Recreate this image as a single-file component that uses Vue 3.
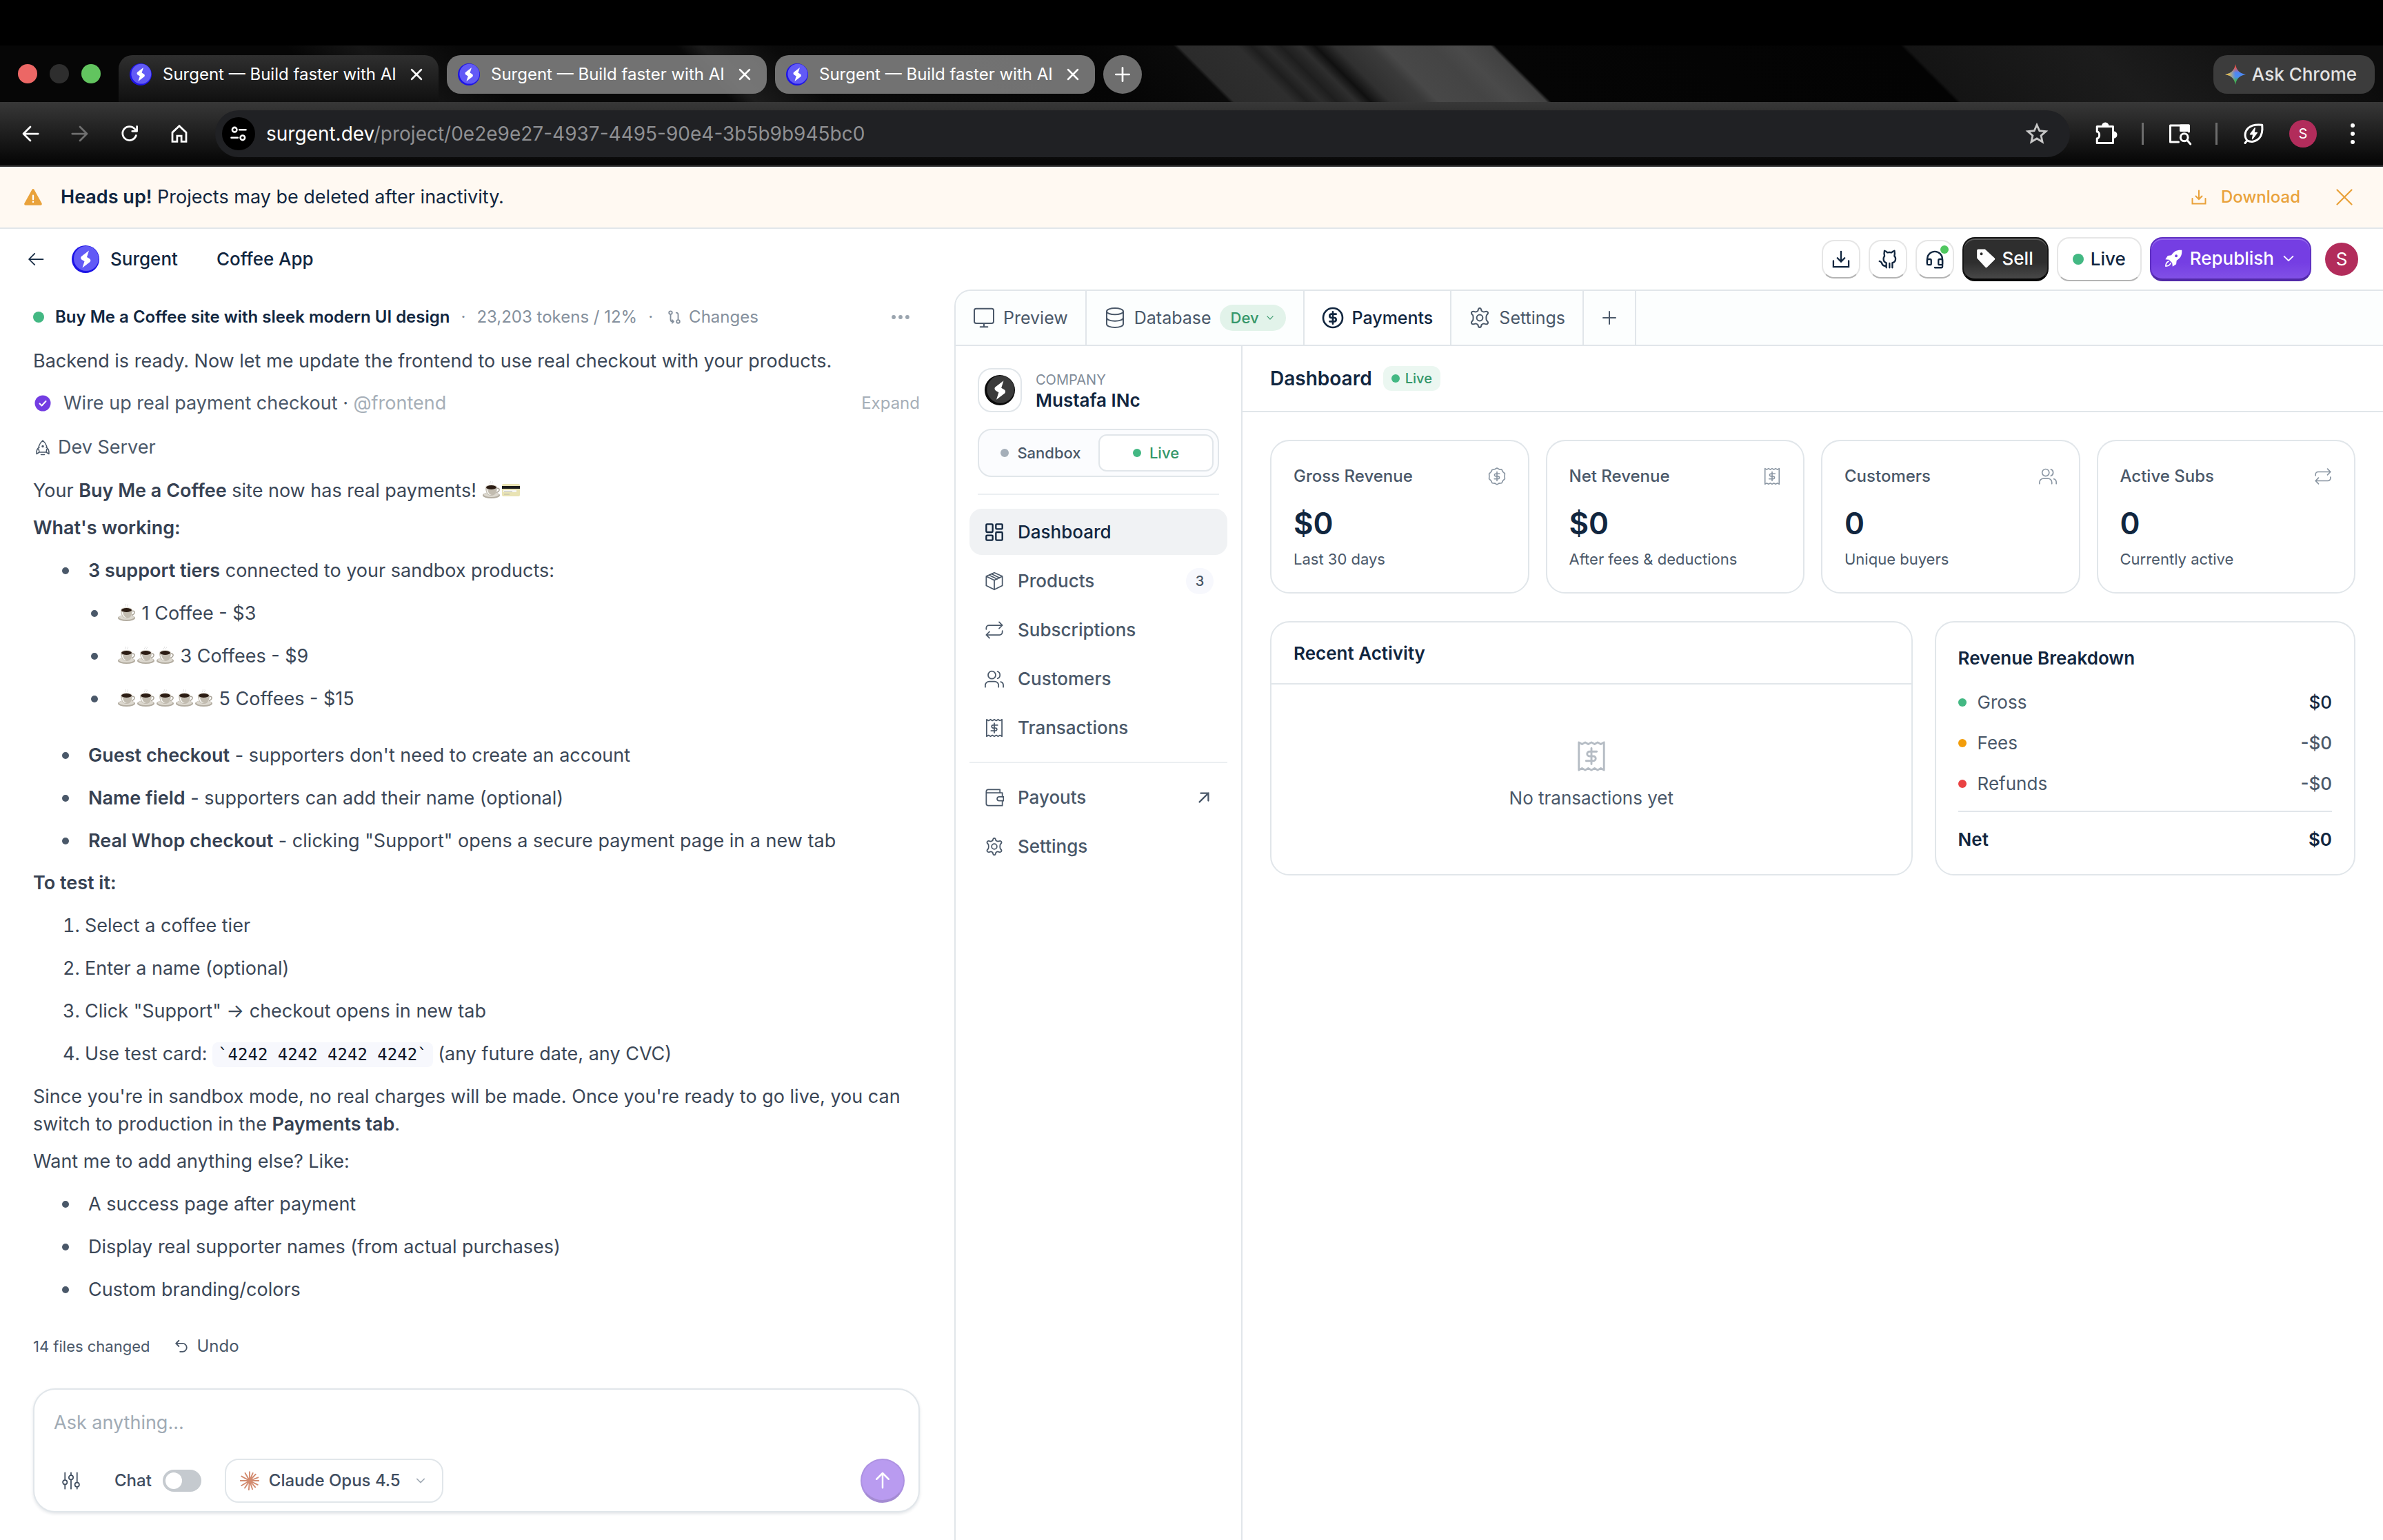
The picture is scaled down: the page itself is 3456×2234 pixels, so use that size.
<template>
    <div class="page">
        <!-- browser window -->
        <div class="tab-strip">
            <div class="lights">
                <span class="light red"></span>
                <span class="light grey"></span>
                <span class="light green"></span>
            </div>
            <div class="tabs">
                <div v-for="n in 3" :key="n" class="tab" :class="{ active: n === 1 }">
                    <Logo class="tab-logo" />
                    <span class="tab-title">Surgent — Build faster with AI</span>
                    <button class="plain" aria-label="Close tab"><Icon name="close" class="tab-close" /></button>
                </div>
                <button class="new-tab" aria-label="New tab"><Icon name="plus" /></button>
            </div>
            <button class="ask-chrome">
                <svg class="spark" viewBox="0 0 32 32">
                    <defs>
                        <linearGradient id="spark" x1="0" y1="0" x2="0" y2="1">
                            <stop offset="0.15" stop-color="#ee5146" />
                            <stop offset="0.42" stop-color="#4c86f5" />
                            <stop offset="0.62" stop-color="#4c8df0" />
                            <stop offset="0.8" stop-color="#3fae5a" />
                        </linearGradient>
                        <linearGradient id="spark-left" x1="0" y1="0" x2="1" y2="0">
                            <stop offset="0.1" stop-color="#fbc02d" />
                            <stop offset="0.5" stop-color="#fbc02d" stop-opacity="0" />
                        </linearGradient>
                    </defs>
                    <path d="M16 1C17.500 10 22 14.500 31 16C22 17.500 17.500 22 16 31C14.500 22 10 17.500 1 16C10 14.500 14.500 10 16 1Z" fill="url(#spark)" />
                    <path d="M16 1C17.500 10 22 14.500 31 16C22 17.500 17.500 22 16 31C14.500 22 10 17.500 1 16C10 14.500 14.500 10 16 1Z" fill="url(#spark-left)" />
                </svg>
                Ask Chrome
            </button>
        </div>
        <div class="toolbar">
            <button class="tool" aria-label="Back"><Icon name="navBack" /></button>
            <button class="tool dim" aria-label="Forward"><Icon name="navForward" /></button>
            <button class="tool" aria-label="Reload"><Icon name="reload" /></button>
            <button class="tool" aria-label="Home"><Icon name="home" /></button>
            <div class="address">
                <button class="site-info" aria-label="Site information"><Icon name="tune" /></button>
                <span class="url"><b>surgent.dev</b>/project/0e2e9e27-4937-4495-90e4-3b5b9b945bc0</span>
                <button class="tool star" aria-label="Bookmark"><Icon name="star" /></button>
            </div>
            <button class="tool big" aria-label="Extensions"><Icon name="puzzle" /></button>
            <span class="tool-line"></span>
            <button class="tool big" aria-label="Search tabs"><Icon name="tabSearch" /></button>
            <span class="tool-line"></span>
            <button class="tool big" aria-label="Energy saver"><Icon name="leaf" /></button>
            <button class="avatar small" aria-label="Profile">S</button>
            <button class="tool big" aria-label="Menu"><Icon name="dotsV" /></button>
        </div>

        <!-- notice -->
        <div class="notice">
            <Icon name="warning" class="warn-icon" />
            <p><strong>Heads up!</strong> Projects may be deleted after inactivity.</p>
            <a class="notice-link" href="#download"><Icon name="download" />Download</a>
            <button class="plain notice-close" aria-label="Dismiss"><Icon name="close" /></button>
        </div>

        <!-- project header -->
        <header class="project-bar">
            <button class="plain back" aria-label="Back to projects"><Icon name="arrowLeft" /></button>
            <a class="brand" href="#home"><Logo class="brand-logo" />Surgent</a>
            <span class="project-name">Coffee App</span>
            <div class="actions">
                <button class="square" aria-label="Download"><Icon name="download" /></button>
                <button class="square" aria-label="GitHub"><Icon name="github" /></button>
                <button class="square" aria-label="Support"><Icon name="headset" /><i class="online"></i></button>
                <button class="btn dark"><Icon name="tag" />Sell</button>
                <button class="btn light-btn"><i class="dot lg"></i>Live</button>
                <button class="btn purple"><Icon name="rocketSolid" />Republish<Icon name="chevron" class="chev" /></button>
            </div>
            <button class="avatar" aria-label="Account">S</button>
        </header>

        <div class="workspace">
            <!-- chat -->
            <section class="chat">
                <div class="chat-head">
                    <i class="dot lg"></i>
                    <strong>Buy Me a Coffee site with sleek modern UI design</strong>
                    <span class="sep">·</span>
                    <span>23,203 tokens / 12%</span>
                    <span class="sep">·</span>
                    <button class="plain changes"><Icon name="branch" />Changes</button>
                    <button class="plain more" aria-label="More"><Icon name="dotsH" /></button>
                </div>

                <div class="messages">
                    <p>Backend is ready. Now let me update the frontend to use real checkout with your products.</p>
                    <div class="step">
                        <Icon name="checkCircle" class="step-icon" />
                        <span>Wire up real payment checkout · <em>@frontend</em></span>
                        <button class="plain expand">Expand</button>
                    </div>
                    <div class="step server"><Icon name="rocket" class="step-icon" />Dev Server</div>
                    <p>Your <b>Buy Me a Coffee</b> site now has real payments! <Coffee /><svg class="emoji" viewBox="0 0 28 28"><rect x="1" y="5" width="26" height="18" rx="2" fill="#e9e3b4" /><rect x="1" y="8" width="26" height="4" fill="#1d1d1b" /><rect x="3" y="14" width="19" height="3" fill="#f6f6f2" /><path d="M4 16h12M4 20h8" stroke="#b9b8a8" stroke-width="1" /></svg></p>
                    <p class="tight"><b>What's working:</b></p>
                    <ul>
                        <li><span><b>3 support tiers</b> connected to your sandbox products:</span></li>
                        <li v-for="tier in tiers" :key="tier.label" class="nested">
                            <span><Coffee v-for="c in tier.cups" :key="c" />{{ ' ' + tier.label }}</span>
                        </li>
                        <li v-for="item in working" :key="item.title" :class="{ 'after-nested': item.first }">
                            <span><b>{{ item.title }}</b> - {{ item.text }}</span>
                        </li>
                    </ul>
                    <p><b>To test it:</b></p>
                    <ol>
                        <li>Select a coffee tier</li>
                        <li>Enter a name (optional)</li>
                        <li>Click "Support" → checkout opens in new tab</li>
                        <li>Use test card: <code>`4242 4242 4242 4242`</code> (any future date, any CVC)</li>
                    </ol>
                    <p>Since you're in sandbox mode, no real charges will be made. Once you're ready to go live, you can switch to production in the <b>Payments tab</b>.</p>
                    <p class="tight">Want me to add anything else? Like:</p>
                    <ul>
                        <li v-for="idea in ideas" :key="idea"><span>{{ idea }}</span></li>
                    </ul>
                    <div class="changed">
                        <span>14 files changed</span>
                        <button class="plain undo"><Icon name="undo" />Undo</button>
                    </div>
                </div>

                <form class="composer" @submit.prevent>
                    <textarea v-model="prompt" rows="1" placeholder="Ask anything..." aria-label="Message"></textarea>
                    <div class="composer-row">
                        <button type="button" class="plain sliders" aria-label="Options"><Icon name="sliders" /></button>
                        <label class="chat-toggle">Chat<input v-model="chatMode" type="checkbox" /></label>
                        <label class="model">
                            <Icon name="claude" class="claude" />
                            <select aria-label="Model"><option>Claude Opus 4.5</option></select>
                            <Icon name="chevron" class="chev" />
                        </label>
                        <button class="send" aria-label="Send"><Icon name="arrowUp" /></button>
                    </div>
                </form>
            </section>

            <!-- right panel -->
            <section class="panel">
                <nav class="panel-tabs">
                    <button class="panel-tab"><Icon name="monitor" />Preview</button>
                    <div class="panel-tab">
                        <Icon name="database" />Database
                        <label class="env">
                            <select aria-label="Database environment"><option>Dev</option></select>
                            <Icon name="chevron" class="chev" />
                        </label>
                    </div>
                    <button class="panel-tab current"><Icon name="dollarCircle" />Payments</button>
                    <button class="panel-tab"><Icon name="gear" />Settings</button>
                    <button class="panel-tab add" aria-label="Add tab"><Icon name="plus" /></button>
                </nav>

                <div class="panel-body">
                    <aside class="side">
                        <div class="company">
                            <span class="company-logo"><Logo dark /></span>
                            <div>
                                <small>COMPANY</small>
                                <strong>Mustafa INc</strong>
                            </div>
                        </div>
                        <div class="mode">
                            <button :class="{ on: mode === 'sandbox' }" @click="mode = 'sandbox'"><i class="dot off"></i>Sandbox</button>
                            <button :class="{ on: mode === 'live' }" @click="mode = 'live'"><i class="dot"></i>Live</button>
                        </div>
                        <nav class="menu">
                            <a v-for="item in menu" :key="item.label" href="#" :class="{ current: item.current, split: item.split }">
                                <Icon :name="item.icon" />
                                <span>{{ item.label }}</span>
                                <i v-if="item.count" class="count">{{ item.count }}</i>
                                <Icon v-if="item.external" name="arrowNe" class="ne" />
                            </a>
                        </nav>
                    </aside>

                    <main class="main">
                        <div class="main-head">
                            <h1>Dashboard</h1>
                            <span class="live-chip"><i class="dot"></i>Live</span>
                        </div>
                        <div class="content">
                            <div class="stats">
                                <div v-for="s in stats" :key="s.label" class="card stat">
                                    <div class="stat-top">{{ s.label }}<Icon :name="s.icon" /></div>
                                    <div class="stat-value">{{ s.value }}</div>
                                    <div class="stat-note">{{ s.note }}</div>
                                </div>
                            </div>
                            <div class="lower">
                                <div class="card recent">
                                    <h2>Recent Activity</h2>
                                    <div class="empty"><Icon name="receipt" />No transactions yet</div>
                                </div>
                                <div class="card breakdown">
                                    <h2>Revenue Breakdown</h2>
                                    <table>
                                        <tbody>
                                            <tr v-for="r in breakdown" :key="r.label">
                                                <th scope="row"><i class="dot" :class="r.color"></i>{{ r.label }}</th>
                                                <td :class="{ strong: r.color === 'gross' }">{{ r.value }}</td>
                                            </tr>
                                        </tbody>
                                        <tfoot>
                                            <tr>
                                                <th scope="row">Net</th>
                                                <td>$0</td>
                                            </tr>
                                        </tfoot>
                                    </table>
                                </div>
                            </div>
                        </div>
                    </main>
                </div>
            </section>
        </div>
    </div>
</template>

<script setup>
import { ref, h } from 'vue';

// 24x24 icon set
const icons = {
    close: '<path d="M5 5l14 14M19 5L5 19"/>',
    plus: '<path d="M12 3v18M3 12h18"/>',
    navBack: '<path d="M21 12H4M12 4l-8 8 8 8"/>',
    navForward: '<path d="M3 12h17M12 4l8 8-8 8"/>',
    reload: '<path d="M19.500 14A8 8 0 1 1 18 6.500l2 2M20.500 3.500v5.500H15"/>',
    home: '<path d="M4 10.500L12 3l8 7.500V21h-5.500v-6.500h-5V21H4z" stroke-linejoin="miter"/>',
    tune: '<circle cx="7" cy="7" r="2.800"/><path d="M13 7h8M3 17h8"/><circle cx="17" cy="17" r="2.800"/>',
    star: '<path d="M12 3l2.700 6 6.500.600-4.900 4.300 1.400 6.400-5.700-3.400-5.700 3.400 1.400-6.400L2.800 9.600l6.500-.600z" stroke-linejoin="miter"/>',
    puzzle: '<path d="M3.500 5H19v16H3.500v-4.500c3 0 3-6.500 0-6.500z"/><path d="M9 4.500a2.500 2.500 0 0 1 5 0z" fill="currentColor"/><path d="M19.500 10.500a2.500 2.500 0 0 1 0 5z" fill="currentColor"/>',
    tabSearch: '<path d="M11 20H3V4h18v6"/><path d="M13 4h8v5h-8z" fill="currentColor"/><circle cx="16.500" cy="15.500" r="3.600"/><path d="M19.200 18.200L22.500 22"/>',
    leaf: '<path d="M4 21l2-2.500C3 15 3.500 10 7 6.500 10.500 3.300 16 3 20.500 3.500c.5 5 .3 9.500-3 13-3.300 3.300-8 4-11.500 2"/><path d="M13.500 6.500l-4.500 6h3l-1 4.500 4.500-6h-3z" fill="currentColor" stroke-width="1"/>',
    dotsV: '<g fill="currentColor" stroke="none"><circle cx="12" cy="4" r="2"/><circle cx="12" cy="12" r="2"/><circle cx="12" cy="20" r="2"/></g>',
    dotsH: '<g fill="currentColor" stroke="none"><circle cx="3.500" cy="12" r="2.500"/><circle cx="12" cy="12" r="2.500"/><circle cx="20.500" cy="12" r="2.500"/></g>',
    warning: '<path d="M12 3.200L21.500 20.500h-19z" fill="currentColor" stroke-width="3"/><path d="M12 10v4.500M12 17.600v.4" stroke="#fff" stroke-width="2"/>',
    download: '<path d="M12 2.500v12M7.500 10.500l4.500 4.500 4.500-4.500M2.500 14v7.500h19V14" stroke-linejoin="miter"/>',
    arrowLeft: '<path d="M21 12H3.500M10.500 5l-7 7 7 7"/>',
    arrowUp: '<path d="M12 21V4M5 11l7-7 7 7"/>',
    arrowNe: '<path d="M5 19L19 5M7 5h12v12" stroke-linejoin="miter"/>',
    github: '<path d="M10 22.500v-6c-1.800-.6-3.500-2-3.500-5 0-1.600.6-2.600 1.300-3.400-.5-2-.6-4.400-.1-6.600 1.700.5 2.900 1.500 3.600 2.200a12 12 0 0 1 5.200 0c.7-.7 1.900-1.700 3.600-2.200.5 2.200.4 4.600-.1 6.600.9.8 1.500 1.800 1.500 3.400 0 3-1.800 4.400-4 5v6M10 20.500c-3 0-4.500-.5-5.200-2.500-.5-1.800-1.200-3-3.300-3.500M14 17v5.500"/>',
    headset: '<path d="M2.500 17v-5a9.500 9.500 0 0 1 19 0v9a1.500 1.500 0 0 1-1.500 1.500h-8"/><rect x="2.500" y="12" width="5" height="7" rx="1.500"/><rect x="16.500" y="12" width="5" height="7" rx="1.500"/>',
    tag: '<path fill="currentColor" stroke="none" fill-rule="evenodd" d="M1 2a1.500 1.500 0 0 1 1.500-1.500h8.500l12 11a1.500 1.500 0 0 1 0 2l-9.500 9.500a1.500 1.500 0 0 1-2 0L1 11.500zM6.500 4.500a1.700 1.700 0 1 0 0 3.400 1.700 1.700 0 0 0 0-3.400z"/>',
    rocketSolid: '<path fill="currentColor" stroke="none" fill-rule="evenodd" d="M22.500 1.500c-6-.5-10 1.500-13 6.500L5 8.500 2 13l4.500.500 4 4 .5 4.500 4.500-3 .5-4.500c5-3 7-7 6.500-13zM15.500 7a1.700 1.700 0 1 1 0 3.400 1.700 1.700 0 0 1 0-3.400z"/><path d="M6 15.500c-2.500 1-3.500 3.500-3.500 6 2.500 0 5-1 6-3.500"/>',
    rocket: '<path d="M7 19c-2-6-1-12 5-17 6 5 7 11 5 17zM7 12c-3 1.500-4.500 4-4 9.500l4-2.500M17 12c3 1.500 4.500 4 4 9.500L17 19M9.500 22.500h5"/><circle cx="12" cy="10.500" r="1" fill="currentColor"/>',
    chevron: '<path d="M5 8.500l7 7 7-7"/>',
    branch: '<circle cx="6" cy="5" r="2.500"/><circle cx="18" cy="19" r="2.500"/><path d="M6 7.500V16a3 3 0 0 0 3 3h2M8.500 16.500L11 19l-2.500 2.500M18 16.500V8a3 3 0 0 0-3-3"/>',
    checkCircle: '<circle cx="12" cy="12" r="11.500" fill="#733de2" stroke="none"/><path d="M7.500 12.500l3 3 6-6.500" stroke="#fff" stroke-width="2"/>',
    undo: '<path d="M8 3L3.500 7.500 8 12M3.500 7.500H14a6.500 6.500 0 0 1 0 13h-4"/>',
    sliders: '<path d="M4.500 2v9M4.500 17v5M12 2v3M12 11v11M19.500 2v12M19.500 20v2"/><circle cx="4.500" cy="14" r="2.700"/><circle cx="12" cy="8" r="2.700"/><circle cx="19.500" cy="17" r="2.700"/>',
    claude: '<path d="M12 12V1M12 12l4-9.500M12 12l7.500-8M12 12l10.500-4M12 12h11.500M12 12l10 5M12 12l7 8M12 12l3.500 10.500M12 12l-1 11.500M12 12l-6 9M12 12l-10 6M12 12H.500M12 12L2 6.500M12 12L6.500 2.500" stroke-width="1.600"/>',
    monitor: '<rect x="1.500" y="2" width="21" height="16" rx="2"/><path d="M12 18v4M8 22h8"/>',
    database: '<ellipse cx="12" cy="5" rx="9" ry="3.500"/><path d="M3 5v14c0 2 4 3.500 9 3.500s9-1.500 9-3.500V5M3 12c0 2 4 3.500 9 3.500s9-1.500 9-3.500"/>',
    dollarCircle: '<circle cx="12" cy="12" r="10.500"/><path d="M12 5.500v13M15.500 8h-5a2 2 0 0 0 0 4h3a2 2 0 0 1 0 4h-5"/>',
    gear: '<circle cx="12" cy="12" r="3.300"/><path d="M10 4.500C10.300 2.500 10.500 1.500 12 1.500s1.700 1 2 3c1 .8 2 1.300 3 1 2-.8 3-1 3.800.4.8 1.300.2 2-1.300 3.300-.6 1-.6 4.600 0 5.600 1.500 1.300 2.100 2 1.300 3.300-.8 1.400-1.800 1.200-3.800.4-1-.3-2 .2-3 1-.3 2-.5 3-2 3s-1.700-1-2-3c-1-.8-2-1.300-3-1-2 .8-3 1-3.800-.4-.8-1.300-.2-2 1.300-3.300.6-1 .6-4.600 0-5.600C3 7.900 2.400 7.200 3.200 5.900c.8-1.400 1.800-1.200 3.800-.4 1 .3 2-.2 3-1z"/>',
    grid: '<rect x="2" y="2" width="8" height="10" rx="1"/><rect x="14" y="2" width="8" height="6" rx="1"/><rect x="2" y="16" width="8" height="6" rx="1"/><rect x="14" y="12" width="8" height="10" rx="1"/>',
    box: '<path d="M12 1.500l10 4.500v11.500L12 22.500 2 17.500V6zM2 6l10 5 10-5M12 11v11.500M5.500 4.500l10 5M8.500 3l10 5"/>',
    repeat: '<path d="M2 11V9.500A3.500 3.500 0 0 1 5.500 6H22M18 2l4 4-4 4M22 13v1.500a3.500 3.500 0 0 1-3.500 3.500H2M6 14l-4 4 4 4"/>',
    users: '<circle cx="9" cy="7" r="4.700"/><path d="M.800 22v-2a5 5 0 0 1 5-5h6.500a5 5 0 0 1 5 5v2M16 2.600a4.700 4.700 0 0 1 0 8.800M20 15.500a4.500 4.500 0 0 1 3.200 4.500v2"/>',
    receipt: '<path d="M2.500 1.500l2.400 1.400 2.400-1.400 2.300 1.400L12 1.500l2.400 1.400 2.300-1.400 2.400 1.400 2.400-1.400v21l-2.400-1.400-2.400 1.400-2.300-1.400-2.400 1.400-2.400-1.400-2.300 1.400-2.400-1.400-2.400 1.400z"/><path d="M12 6v12M16 8.500h-5.500a1.750 1.750 0 0 0 0 3.500h3a1.750 1.750 0 0 1 0 3.500H8"/>',
    dollarBadge: '<path d="M12 1l3 1.600 3.400.3 1.500 3 2.600 2.200L22.300 12l.2 3.400-2.600 2.400-1.500 3.200-3.400.3L12 23l-3-1.700-3.400-.3-1.500-3.200-2.600-2.400.2-3.400-.2-3.400 2.600-2.600 1.500-2.800L9 2.600z"/><path d="M12 6v12M15.500 8.500h-5a1.750 1.750 0 0 0 0 3.500h3a1.750 1.750 0 0 1 0 3.500h-5"/>',
    wallet: '<path d="M2 4.500A2.500 2.500 0 0 1 4.500 2H19v4M2 4.500v15A2.500 2.500 0 0 0 4.500 22H22v-6M2 6h20v5"/><path d="M23.500 11H18a2.500 2.500 0 0 0 0 5h5.500z"/>',
};

const Icon = (props) => h('svg', { class: 'icon', viewBox: '0 0 24 24', 'aria-hidden': 'true', innerHTML: icons[props.name] });

// round lightning badge
const Logo = (props) => {
    const dark = props.dark !== undefined;
    return h('svg', { viewBox: '0 0 40 40', 'aria-hidden': 'true' }, [
        h('circle', { cx: 20, cy: 20, r: 20, fill: dark ? '#0b0b0b' : '#1d14e6' }),
        h('circle', { cx: 21, cy: 19, r: 18, fill: dark ? '#3a3a3a' : '#625af6' }),
        h('path', { d: 'M25 7.500L14 16c-1.500 1.500-1 3.800 1 5l3.500 2-3 9.500L26.500 24c1.500-1.500 1-4-1-5L22 17z', fill: '#fff' }),
    ]);
};

const Coffee = () => h('svg', {
    class: 'emoji',
    viewBox: '0 0 28 28',
    innerHTML: '<path d="M12 5c-2-2 2-2 0-4M15 5c-2-2 2-2 0-3.500" fill="none" stroke="#dcdcdc"/>'
        + '<ellipse cx="13.500" cy="21.500" rx="12.500" ry="4.500" fill="#b3ada1"/><ellipse cx="13.500" cy="20.500" rx="11" ry="3.500" fill="#dcd8cf"/>'
        + '<path d="M21 11.500c5-1.500 6 4 0 6" fill="none" stroke="#aaa498" stroke-width="1.500"/>'
        + '<path d="M5 9.500h17c0 7-2.500 12.500-8.500 12.500S5 16.500 5 9.500z" fill="#c2bcb0"/><path d="M8 13c1 5 3 7.500 6 8-4.500.5-7-3-7.500-8z" fill="#f7f6f2"/>'
        + '<ellipse cx="13.500" cy="9.500" rx="8.500" ry="3.500" fill="#e0dcd3"/><ellipse cx="13.500" cy="10" rx="7.500" ry="3" fill="#2c1d14"/>',
});

const prompt = ref('');
const chatMode = ref(false);
const mode = ref('live');

const tiers = [
    { cups: 1, label: '1 Coffee - $3' },
    { cups: 3, label: '3 Coffees - $9' },
    { cups: 5, label: '5 Coffees - $15' },
];

const working = [
    { title: 'Guest checkout', text: "supporters don't need to create an account", first: true },
    { title: 'Name field', text: 'supporters can add their name (optional)' },
    { title: 'Real Whop checkout', text: 'clicking "Support" opens a secure payment page in a new tab' },
];

const ideas = [
    'A success page after payment',
    'Display real supporter names (from actual purchases)',
    'Custom branding/colors',
];

const menu = [
    { label: 'Dashboard', icon: 'grid', current: true },
    { label: 'Products', icon: 'box', count: 3 },
    { label: 'Subscriptions', icon: 'repeat' },
    { label: 'Customers', icon: 'users' },
    { label: 'Transactions', icon: 'receipt' },
    { label: 'Payouts', icon: 'wallet', external: true, split: true },
    { label: 'Settings', icon: 'gear' },
];

const stats = [
    { label: 'Gross Revenue', value: '$0', note: 'Last 30 days', icon: 'dollarBadge' },
    { label: 'Net Revenue', value: '$0', note: 'After fees & deductions', icon: 'receipt' },
    { label: 'Customers', value: '0', note: 'Unique buyers', icon: 'users' },
    { label: 'Active Subs', value: '0', note: 'Currently active', icon: 'repeat' },
];

const breakdown = [
    { label: 'Gross', value: '$0', color: 'gross' },
    { label: 'Fees', value: '-$0', color: 'fees' },
    { label: 'Refunds', value: '-$0', color: 'refunds' },
];
</script>

<style>
body {
    margin: 0;
    background: #fff;
}
</style>

<style scoped>
.page {
    display: flex;
    flex-direction: column;
    min-height: 100vh;
    font-family: Inter, "Liberation Sans", sans-serif;
    font-size: 27px;
    line-height: 40px;
    color: #11263f;
}

.page *,
.page *::before {
    box-sizing: border-box;
}

button,
select,
textarea {
    font: inherit;
    color: inherit;
    cursor: pointer;
}

a {
    color: inherit;
    text-decoration: none;
}

p,
h1,
h2,
ul,
ol {
    margin: 0;
    padding: 0;
}

.icon {
    flex: none;
    width: 28px;
    height: 28px;
    fill: none;
    stroke: currentColor;
    stroke-width: 1.5;
    stroke-linecap: round;
    stroke-linejoin: round;
}

.plain {
    display: flex;
    align-items: center;
    padding: 0;
    border: none;
    background: none;
}

.dot {
    flex: none;
    width: 12px;
    height: 12px;
    border-radius: 50%;
    background: #43b883;
}

.dot.lg {
    width: 16px;
    height: 16px;
}

.dot.off {
    background: #a5afb9;
}

.dot.fees {
    background: #f29d0b;
}

.dot.refunds {
    background: #ea4243;
}

.avatar {
    flex: none;
    width: 48px;
    height: 48px;
    padding: 0;
    border: none;
    border-radius: 50%;
    background: #b22c5b;
    color: #fff;
    font-size: 26px;
    font-weight: 400;
}

.avatar.small {
    width: 40px;
    height: 40px;
    font-size: 20px;
    line-height: 40px;
}

/* tab strip */
.tab-strip {
    display: flex;
    align-items: flex-start;
    height: 148px;
    padding: 14px 12px 0 26px;
    border-top: 66px solid #000;
    background: linear-gradient(45deg, #060606 14%, #161616 17%, #080808 21%, #080808 30%, #1c1c1c 31%, #0a0a0a 34%, #050505 46%, #0a0a0a 50.4%, #2b2b2b 50.6%, #2e2e2e 53%, #1e1e1e 53.6%, #2c2c2c 54.2%, #1e1e1e 54.8%, #2e2e2e 55.6%, #101010 56.2%, #303030 57%, #3a3a3a 58.4%, #484848 59%, #444 61%, #4a4a4a 62%, #414141 63.4%, #050505 63.6%, #030303 80.2%, #141414 80.4%, #1c1c1c 88%, #0c0c0c 98%);
    color: #fff;
}

.lights {
    display: flex;
    gap: 18px;
    margin: 13px 26px 0 0;
}

.light {
    width: 28px;
    height: 28px;
    border-radius: 50%;
}

.red {
    background: #ec6765;
}

.grey {
    background: #2e2e2e;
}

.green {
    background: #62c45f;
}

.tabs {
    display: flex;
    flex: 1;
    gap: 12px;
}

.tab {
    display: flex;
    align-items: center;
    width: 464px;
    height: 56px;
    padding: 0 20px 0 16px;
    border-radius: 20px;
    background: rgba(135, 135, 135, 0.84);
}

.tab.active {
    height: 68px;
    padding-bottom: 12px;
    border-radius: 20px 20px 0 0;
    background: linear-gradient(#2f2f2f, #101010);
}

.tab-logo {
    width: 32px;
    height: 32px;
    margin-right: 16px;
}

.tab-title {
    flex: 1;
    font-size: 24px;
    white-space: nowrap;
}

.tab-close {
    width: 24px;
    height: 24px;
    stroke-width: 2.5;
}

.new-tab {
    display: flex;
    align-items: center;
    justify-content: center;
    width: 56px;
    height: 56px;
    padding: 0;
    border: none;
    border-radius: 50%;
    background: #6e6e6e;
}

.new-tab .icon {
    width: 26px;
    height: 26px;
    stroke-width: 2.5;
}

.ask-chrome {
    display: flex;
    align-items: center;
    gap: 8px;
    height: 56px;
    padding: 0 26px 0 16px;
    border: none;
    border-radius: 20px;
    background: #3c3c3c;
    color: #e3e3e3;
    font-weight: 500;
    font-size: 26px;
}

.spark {
    width: 32px;
    height: 32px;
}

/* toolbar */
.toolbar {
    display: flex;
    align-items: center;
    gap: 32px;
    height: 94px;
    padding: 0 24px;
    border-bottom: 2px solid #3a3a3a;
    background: linear-gradient(#383838, #080808 92%);
    color: #fff;
}

.tool {
    display: flex;
    flex: none;
    align-items: center;
    justify-content: center;
    width: 40px;
    height: 40px;
    padding: 0;
    border: none;
    background: none;
}

.tool .icon {
    width: 30px;
    height: 30px;
    stroke-width: 2.2;
}

.tool.big .icon {
    width: 36px;
    height: 36px;
    stroke-width: 2;
}

.tool.dim {
    color: #6f6f6f;
}

.tool-line {
    width: 3px;
    height: 32px;
    background: #6d6d6d;
}

.address {
    display: flex;
    flex: 1;
    align-items: center;
    height: 68px;
    padding: 0 28px 0 10px;
    border-radius: 34px;
    background: #202124;
}

.site-info {
    display: flex;
    align-items: center;
    justify-content: center;
    width: 48px;
    height: 48px;
    margin-right: 16px;
    padding: 0;
    border: none;
    border-radius: 50%;
    background: #000;
}

.site-info .icon {
    width: 28px;
    height: 28px;
    stroke-width: 2.2;
}

.url {
    flex: 1;
    color: #8f9093;
    font-size: 28px;
}

.url b {
    color: #fff;
    font-weight: 400;
}

.star {
    color: #c7c7c7;
}

.star .icon {
    width: 34px;
    height: 34px;
    stroke-width: 2;
}

/* notice */
.notice {
    display: flex;
    align-items: center;
    height: 90px;
    padding: 0 38px 0 34px;
    border-bottom: 2px solid #e1e6ea;
    background: #fff9f2;
}

.warn-icon {
    color: #e9a23b;
}

.notice p {
    flex: 1;
    margin-left: 26px;
}

.notice strong {
    font-weight: 600;
}

.notice-link {
    display: flex;
    align-items: center;
    gap: 20px;
    color: #e9a23b;
    font-size: 24px;
    font-weight: 500;
}

.notice-link .icon {
    width: 24px;
    height: 24px;
    stroke-width: 2;
}

.notice-close {
    margin-left: 46px;
    color: #e9a23b;
}

.notice-close .icon {
    width: 36px;
    height: 36px;
}

/* project bar */
.project-bar {
    display: flex;
    align-items: center;
    height: 88px;
    padding: 0 36px 0 38px;
    font-weight: 500;
    font-size: 26px;
}

.back {
    margin-right: 38px;
}

.brand {
    display: flex;
    align-items: center;
    gap: 16px;
}

.brand-logo {
    width: 40px;
    height: 40px;
}

.project-name {
    flex: 1;
    margin-left: 56px;
}

.actions {
    display: flex;
    align-items: center;
    gap: 12px;
    margin-right: 20px;
}

.square {
    position: relative;
    display: flex;
    align-items: center;
    justify-content: center;
    width: 56px;
    height: 56px;
    padding: 0;
    border: 2px solid #e6e6e6;
    border-bottom-color: #b4b4b4;
    border-radius: 18px;
    background: #fff;
}

.square .icon {
    stroke-width: 2;
}

.online {
    position: absolute;
    top: 6px;
    right: 6px;
    width: 12px;
    height: 12px;
    border-radius: 50%;
    background: #4fc75f;
}

.btn {
    display: flex;
    align-items: center;
    gap: 10px;
    height: 64px;
    padding: 0 20px 0 18px;
    border: 2px solid #e6e6e6;
    border-bottom-color: #b4b4b4;
    border-radius: 18px;
    background: #fff;
    font-weight: 500;
    font-size: 26px;
}

.light-btn {
    padding: 0 21px;
}

.dark {
    border-color: #141414;
    border-bottom: 4px solid #080808;
    background: linear-gradient(#2e2e2e 60%, #484848);
    box-shadow: inset 0 2px 0 #5c5c5c;
    color: #fff;
}

.purple {
    border-color: #5f30c2;
    border-bottom: 4px solid #5229a8;
    background: linear-gradient(#753ee3 60%, #8150e6);
    box-shadow: inset 0 2px 0 #9468ec;
    color: #fff;
}

.btn .chev {
    width: 22px;
    height: 22px;
    stroke-width: 2;
}

/* workspace */
.workspace {
    display: grid;
    flex: 1;
    grid-template-columns: 173fr 259fr;
}

.chat {
    display: flex;
    flex-direction: column;
    min-width: 0;
    padding: 0 50px 40px 48px;
}

.chat-head {
    display: flex;
    align-items: center;
    height: 80px;
    color: #85909d;
    font-size: 24px;
}

.chat-head strong {
    margin-left: 16px;
    color: #11263f;
    font-weight: 600;
}

.sep {
    margin: 0 16px;
}

.changes {
    gap: 10px;
    margin-left: 4px;
}

.changes .icon {
    width: 22px;
    height: 22px;
    stroke-width: 2;
}

.more {
    margin-left: auto;
    margin-right: 14px;
    color: #9aa4ae;
}

.messages {
    display: flex;
    flex: 1;
    flex-direction: column;
    gap: 21px;
    margin-top: 4px;
    color: #3b4757;
}

.messages b {
    color: #364152;
    font-weight: 600;
}

.messages .tight {
    margin-top: -7px;
}

.step {
    display: flex;
    align-items: center;
    gap: 18px;
    color: #4a5869;
}

.step em {
    color: #a6afb8;
    font-style: normal;
}

.step-icon {
    width: 24px;
    height: 24px;
    margin-left: 2px;
}

.server {
    gap: 10px;
    margin: 3px 0 2px;
}

.expand {
    margin-left: auto;
    color: #a6afb8;
    font-size: 24px;
}

.emoji {
    width: 28px;
    height: 28px;
    vertical-align: -4px;
}

ul {
    display: flex;
    flex-direction: column;
    gap: 22px;
    margin-top: 1px;
    list-style: none;
}

ul li {
    display: flex;
    align-items: center;
    padding-left: 42px;
}

ul li::before {
    content: "";
    width: 10px;
    height: 10px;
    margin-right: 28px;
    border-radius: 50%;
    background: #4a5869;
}

ul li.nested {
    padding-left: 84px;
}

.after-nested {
    margin-top: 20px;
}

ol {
    display: flex;
    flex-direction: column;
    gap: 22px;
    margin-top: 1px;
    padding-left: 75px;
}

code {
    padding: 4px 8px;
    border-radius: 8px;
    background: #f7f8fd;
    color: #0d1526;
    font-family: "DejaVu Sans Mono", monospace;
    font-size: 24px;
}

.changed {
    display: flex;
    align-items: center;
    gap: 34px;
    margin-top: 21px;
    color: #4a5869;
    font-size: 22px;
}

.undo {
    gap: 12px;
    font-size: 24px;
}

.undo .icon {
    width: 22px;
    height: 22px;
    stroke-width: 2;
}

/* composer */
.composer {
    padding: 28px 20px 12px 28px;
    border: 2px solid #e1e6ea;
    border-radius: 32px;
    background: #fff;
    box-shadow: 0 2px 4px rgba(17, 38, 63, 0.12);
}

textarea {
    display: block;
    width: 100%;
    height: 42px;
    padding: 0;
    border: none;
    outline: none;
    resize: none;
    background: none;
}

textarea::placeholder {
    color: #a1abb5;
}

.composer-row {
    display: flex;
    align-items: center;
    margin-top: 30px;
    color: #3f4d5f;
    font-weight: 500;
    font-size: 24px;
}

.sliders {
    justify-content: center;
    width: 50px;
    height: 50px;
    margin-right: 38px;
}

.chat-toggle {
    display: flex;
    align-items: center;
    gap: 16px;
    margin-right: 34px;
}

.chat-toggle input {
    display: flex;
    align-items: center;
    width: 56px;
    height: 32px;
    margin: 0;
    padding: 4px;
    border-radius: 16px;
    background: #c5cacf;
    appearance: none;
}

.chat-toggle input::before {
    content: "";
    width: 24px;
    height: 24px;
    border-radius: 50%;
    background: #fff;
}

.chat-toggle input:checked {
    justify-content: flex-end;
    background: #733de2;
}

select {
    padding: 0;
    border: none;
    outline: none;
    background: none;
    appearance: none;
}

.model {
    display: flex;
    align-items: center;
    gap: 14px;
    height: 64px;
    padding: 0 22px 0 20px;
    border: 2px solid #e1e6ea;
    border-radius: 20px;
}

.claude {
    color: #d28a6e;
}

.chev {
    width: 18px;
    height: 18px;
    stroke-width: 2;
}

.model .chev {
    color: #a1abb5;
    margin-left: 6px;
}

.send {
    display: flex;
    align-items: center;
    justify-content: center;
    width: 64px;
    height: 64px;
    margin-left: auto;
    padding: 0;
    border: 2px solid #ad92e2;
    border-bottom: 4px solid #a48bd3;
    border-radius: 50%;
    background: #b99bf0;
    color: #fff;
}

.send .icon {
    width: 30px;
    height: 30px;
    stroke-width: 2;
}

/* panel */
.panel {
    display: flex;
    flex-direction: column;
    min-width: 0;
    border-top: 2px solid #e1e6ea;
    border-left: 2px solid #e1e6ea;
    border-top-left-radius: 24px;
}

.panel-tabs {
    display: flex;
    height: 80px;
    border-bottom: 2px solid #e1e6ea;
    border-top-left-radius: 22px;
    background: #fcfefe;
}

.panel-tab {
    display: flex;
    align-items: center;
    gap: 12px;
    padding: 0 25px;
    border: none;
    border-right: 2px solid #e1e6ea;
    background: none;
    color: #4a5869;
    font-size: 25px;
}

.panel-tab .icon {
    width: 32px;
    height: 32px;
}

.panel-tab.current {
    background: #fff;
    color: #11263f;
    font-weight: 500;
}

.panel-tab.current .icon {
    stroke-width: 2;
}

.panel-tab.add .icon {
    width: 24px;
    height: 24px;
    stroke-width: 2;
}

.env {
    display: flex;
    align-items: center;
    gap: 8px;
    height: 38px;
    padding: 0 16px;
    border-radius: 19px;
    background: #e2f3ea;
    color: #35976a;
    font-size: 22px;
    font-weight: 500;
}

.panel-tab .env .chev {
    width: 14px;
    height: 14px;
    stroke-width: 2;
}

.panel-body {
    display: flex;
    flex: 1;
}

.side {
    flex: none;
    width: 416px;
    padding: 32px 20px;
    border-right: 2px solid #e1e6ea;
}

.company {
    display: flex;
    align-items: center;
    gap: 20px;
    padding: 0 12px;
}

.company-logo {
    display: flex;
    align-items: center;
    justify-content: center;
    width: 64px;
    height: 64px;
    border: 2px solid #e1e6ea;
    border-radius: 20px;
}

.company-logo svg {
    width: 44px;
    height: 44px;
}

.company small,
.company strong {
    display: block;
    line-height: 30px;
}

.company small {
    color: #7f8b98;
    font-size: 20px;
}

.company strong {
    font-size: 26px;
    font-weight: 600;
}

.mode {
    display: grid;
    grid-template-columns: 1fr 1fr;
    margin: 24px 12px 24px;
    padding: 6px;
    border: 2px solid #e1e6ea;
    border-radius: 20px;
    background: #fbfcfe;
}

.mode button {
    display: flex;
    align-items: center;
    justify-content: center;
    gap: 12px;
    height: 54px;
    padding: 0;
    border: 2px solid transparent;
    border-radius: 12px;
    background: none;
    color: #4a5869;
    font-size: 22px;
    font-weight: 500;
}

.mode button.on {
    border-color: #e1e6ea;
    background: #fff;
    color: #35976a;
}

.menu {
    display: flex;
    flex-direction: column;
    gap: 4px;
}

.menu::before {
    content: "";
    height: 2px;
    margin: 0 12px 16px;
    background: #ebeff2;
}

.menu a {
    display: flex;
    align-items: center;
    gap: 20px;
    height: 67px;
    padding: 0 20px 0 22px;
    border-radius: 18px;
    color: #4a5869;
    font-size: 26px;
    font-weight: 500;
}

.menu a span {
    flex: 1;
}

.menu a.current {
    background: #f0f2f4;
    color: #11263f;
}

.menu a.current .icon {
    stroke-width: 2;
}

.menu a.split {
    height: 85px;
    margin-top: 12px;
    padding-top: 16px;
    border-top: 2px solid #ebeff2;
    border-radius: 0;
}

.count {
    width: 40px;
    height: 38px;
    border-radius: 19px;
    background: #f7f8fd;
    font-size: 20px;
    font-style: normal;
    line-height: 38px;
    text-align: center;
}

.menu .ne {
    width: 22px;
    height: 22px;
    margin-right: 3px;
    stroke-width: 2.5;
}

/* dashboard */
.main {
    flex: 1;
    min-width: 0;
}

.main-head {
    display: flex;
    align-items: center;
    gap: 16px;
    height: 96px;
    padding: 0 40px;
    border-bottom: 2px solid #e1e6ea;
}

h1 {
    font-size: 28px;
    font-weight: 600;
}

.live-chip {
    display: flex;
    align-items: center;
    gap: 8px;
    height: 36px;
    padding: 0 12px;
    border-radius: 12px;
    background: #ebf7f1;
    color: #35976a;
    font-size: 20px;
    font-weight: 500;
}

.content {
    padding: 40px;
}

.card {
    border: 2px solid #e1e6ea;
    border-radius: 28px;
}

.stats {
    display: grid;
    grid-template-columns: repeat(4, 1fr);
    gap: 24px;
}

.stat {
    padding: 31px 32px 30px;
    color: #4a5869;
}

.stat-top {
    display: flex;
    align-items: center;
    justify-content: space-between;
    font-size: 24px;
    font-weight: 500;
}

.stat-top .icon {
    width: 26px;
    height: 26px;
    color: #8894a1;
}

.stat-value {
    margin: 20px 0 6px;
    color: #11263f;
    font-size: 44px;
    font-weight: 600;
    line-height: 56px;
}

.stat-note {
    font-size: 22px;
    line-height: 36px;
}

.lower {
    display: grid;
    grid-template-columns: repeat(5, 1fr);
    gap: 32px;
    margin-top: 40px;
}

h2 {
    font-size: 26px;
    font-weight: 600;
}

.recent {
    display: flex;
    flex-direction: column;
    grid-column: span 3;
}

.recent h2 {
    height: 90px;
    padding: 0 32px;
    border-bottom: 2px solid #e1e6ea;
    line-height: 90px;
}

.empty {
    display: flex;
    flex: 1;
    flex-direction: column;
    align-items: center;
    justify-content: center;
    gap: 18px;
    padding-bottom: 10px;
    color: #4a5869;
    font-size: 26px;
}

.empty .icon {
    width: 46px;
    height: 46px;
    color: #b5bcc4;
}

.breakdown {
    grid-column: span 2;
    padding: 32px 32px 10px;
}

table {
    width: 100%;
    margin-top: 14px;
    border-spacing: 0;
    color: #4a5869;
    font-size: 26px;
}

tr {
    height: 59px;
}

th,
td {
    padding: 0;
    font-weight: 400;
    text-align: left;
}

th .dot {
    display: inline-block;
    margin-right: 16px;
    vertical-align: 3px;
}

td {
    font-weight: 500;
    text-align: right;
}

td.strong {
    color: #11263f;
}

tbody tr:last-child {
    height: 69px;
}

tbody tr:last-child th,
tbody tr:last-child td {
    padding-bottom: 10px;
}

tfoot tr {
    height: 82px;
    color: #11263f;
}

tfoot th,
tfoot td {
    border-top: 2px solid #e1e6ea;
    font-weight: 600;
}
</style>
